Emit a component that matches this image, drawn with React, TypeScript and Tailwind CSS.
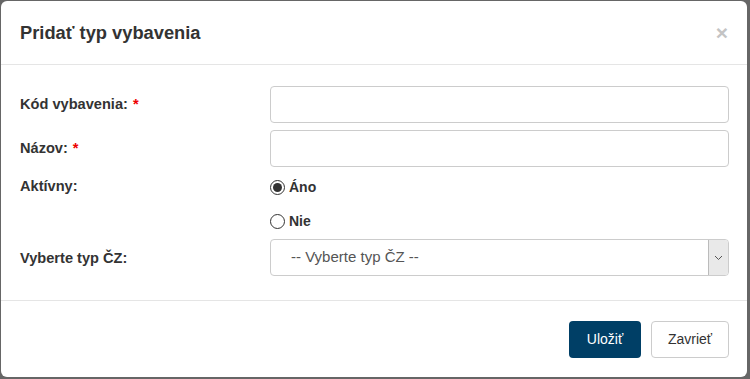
import React from "react";

const font = { fontFamily: '"Liberation Sans", Arial, sans-serif' };

function Label({ children, required }: { children: React.ReactNode; required?: boolean }) {
  return (
    <label className="text-[14.6px] font-bold text-[#333]">
      {children}
      {required && <span className="ml-[5px] text-[#e00]">*</span>}
    </label>
  );
}

function Radio({ checked, label }: { checked?: boolean; label: string }) {
  return (
    <label className="flex h-[26px] items-center gap-[4px] text-[14px] font-bold text-[#333]">
      <span className="grid h-[15px] w-[15px] place-items-center rounded-full border border-[#333] bg-white">
        {checked && <span className="h-[9px] w-[9px] rounded-full bg-[#333]" />}
      </span>
      {label}
    </label>
  );
}

export default function App() {
  return (
    <div style={font} className="h-[379px] w-[750px] overflow-hidden bg-[#666] pl-px pt-px">
      <div className="flex h-[376px] w-[746px] flex-col rounded-[6px] bg-white">
        <div className="flex h-[64px] items-center justify-between border-b border-[#e5e5e5] pl-[19px] pr-[19px]">
          <h4 className="text-[18.3px] font-bold text-[#333]">Pridať typ vybavenia</h4>
          <span className="text-[21px] font-bold leading-none text-[#c4c4c4]">×</span>
        </div>

        <div className="grid grid-cols-[250px_1fr] items-center gap-y-[7px] border-b border-[#e5e5e5] pb-[24px] pl-[19px] pr-[18px] pt-[21px]">
          <Label required>Kód vybavenia:</Label>
          <input className="h-[37px] rounded-[4px] border border-[#ccc] px-3 text-[14px] outline-none" />

          <Label required>Názov:</Label>
          <input className="h-[37px] rounded-[4px] border border-[#ccc] px-3 text-[14px] outline-none" />

          <div className="self-start">
            <div className="flex h-[26px] items-center">
              <Label>Aktívny:</Label>
            </div>
          </div>
          <div className="flex flex-col gap-[8px]">
            <Radio checked label="Áno" />
            <Radio label="Nie" />
          </div>

          <Label>Vyberte typ ČZ:</Label>
          <div className="mt-[-2px] flex h-[37px] overflow-hidden rounded-[4px] border border-[#ccc]">
            <div className="flex flex-1 items-center pl-5 text-[15px] text-[#555]">-- Vyberte typ ČZ --</div>
            <div className="grid w-[20px] place-items-center border-l border-[#bbb] bg-[#e9e9e9]">
              <svg width="9" height="6" viewBox="0 0 9 6" fill="none">
                <path d="M1 1l3.5 3.5L8 1" stroke="#555" strokeWidth="1" />
              </svg>
            </div>
          </div>
        </div>

        <div className="flex flex-1 items-start justify-end gap-[10px] pr-[18px] pt-[20px]">
          <button className="h-[37px] w-[72px] rounded-[4px] bg-[#003f66] text-[14px] text-white">Uložiť</button>
          <button className="h-[37px] w-[78px] rounded-[4px] border border-[#ccc] bg-white text-[14px] text-[#333]">Zavrieť</button>
        </div>
      </div>
    </div>
  );
}
